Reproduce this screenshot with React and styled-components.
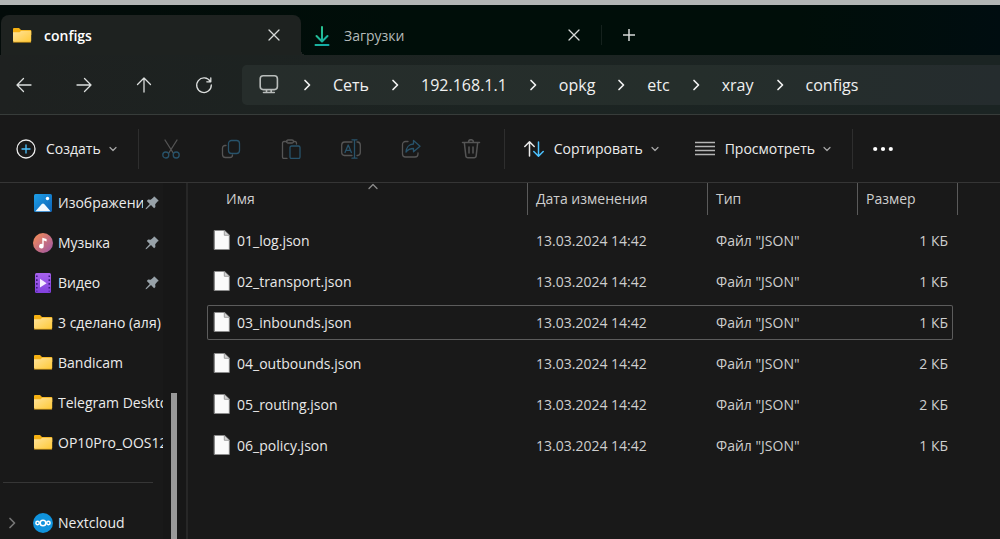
import React, { useState } from "react";
import styled, { createGlobalStyle, css } from "styled-components";

const places = [
  { name: "Изображения", icon: "pictures", pinned: true },
  { name: "Музыка", icon: "music", pinned: true },
  { name: "Видео", icon: "video", pinned: true },
  { name: "3 сделано (аля)", icon: "folder" },
  { name: "Bandicam", icon: "folder" },
  { name: "Telegram Desktop", icon: "folder" },
  { name: "OP10Pro_OOS12", icon: "folder" },
];

const crumbs = ["Сеть", "192.168.1.1", "opkg", "etc", "xray", "configs"];

const files = [
  { name: "01_log.json", size: "1 КБ" },
  { name: "02_transport.json", size: "1 КБ" },
  { name: "03_inbounds.json", size: "1 КБ" },
  { name: "04_outbounds.json", size: "2 КБ" },
  { name: "05_routing.json", size: "2 КБ" },
  { name: "06_policy.json", size: "1 КБ" },
];

/* ---------- icons ---------- */

const Icon = ({ size = 20, children, ...rest }) => (
  <svg
    width={size}
    height={size}
    viewBox={`0 0 ${size} ${size}`}
    fill="none"
    stroke="currentColor"
    strokeWidth="1.3"
    strokeLinecap="round"
    strokeLinejoin="round"
    aria-hidden="true"
    {...rest}
  >
    {children}
  </svg>
);

const BLUE = "#4cc2ff";
const DIM = "#555555";
const DIM_BLUE = "#28536b";

const FolderIcon = () => (
  <Icon stroke="none">
    <defs>
      <linearGradient id="folderFront" x1="0" y1="0" x2="1" y2="1">
        <stop offset="0" stopColor="#ffe39b" />
        <stop offset="1" stopColor="#ffc937" />
      </linearGradient>
    </defs>
    <path d="M1 3a1 1 0 0 1 1-1h5l2 2h9.500a.8.8 0 0 1 .8.8V9H1z" fill="#f5b012" />
    <path d="M1 6.300h6.500L9.300 4.700h9a.9.9 0 0 1 .9.9v9.500a1 1 0 0 1-1 1H2a1 1 0 0 1-1-1z" fill="url(#folderFront)" />
    <path d="M1.500 16.200h17.200" stroke="#e0a21b" strokeWidth=".8" />
  </Icon>
);

const PicturesIcon = () => (
  <Icon stroke="none">
    <defs>
      <linearGradient id="picBg" x1="0" y1="0" x2="1" y2="1">
        <stop offset="0" stopColor="#1d9fe8" />
        <stop offset="1" stopColor="#0d62b5" />
      </linearGradient>
    </defs>
    <rect x="1" y="1" width="18" height="18" rx="1.500" fill="url(#picBg)" />
    <path d="M2.500 18.300l6.300-7.200q1.200-1.300 2.400 0l6.300 7.200z" fill="#f2f9ff" />
    <circle cx="14.500" cy="5.500" r="1.700" fill="#fff" />
  </Icon>
);

const MusicIcon = () => (
  <Icon stroke="none">
    <defs>
      <linearGradient id="musicBg" x1="0" y1="0" x2="1" y2="1">
        <stop offset="0.100" stopColor="#f08a5b" />
        <stop offset="0.900" stopColor="#a3589f" />
      </linearGradient>
    </defs>
    <circle cx="10" cy="10" r="10" fill="url(#musicBg)" />
    <path d="M9.300 4.800l4.300 1.300v2.400l-2.900-.9v5.600a2.300 2.300 0 1 1-1.400-2.100z" fill="#fff" />
  </Icon>
);

const VideoIcon = () => (
  <Icon stroke="none">
    <defs>
      <linearGradient id="videoBg" x1="0" y1="0" x2="0" y2="1">
        <stop offset="0" stopColor="#a862ee" />
        <stop offset="1" stopColor="#8140dc" />
      </linearGradient>
    </defs>
    <rect x="2" y="0" width="16" height="20" rx="1.500" fill="url(#videoBg)" />
    <path d="M3.800 2.500v16M16.300 2.500v16" stroke="#3c1a80" strokeWidth="1.600" strokeDasharray="1.600 2.200" strokeLinecap="butt" />
    <path d="M7 5.800l6.600 4.400L7 14.600z" fill="#f5edff" />
  </Icon>
);

const CloudIcon = () => (
  <Icon stroke="#fff" strokeWidth="1.500">
    <circle cx="10" cy="10" r="10" fill="#1093dd" stroke="none" />
    <circle cx="10" cy="10" r="2.800" />
    <circle cx="4.600" cy="10" r="1.700" />
    <circle cx="15.400" cy="10" r="1.700" />
  </Icon>
);

const placeIcons = {
  folder: FolderIcon,
  pictures: PicturesIcon,
  music: MusicIcon,
  video: VideoIcon,
};

const PinIcon = () => (
  <Icon size={14} stroke="none" fill="#98a2a9">
    <path d="M8.700.7q.5-.5 1 0l3.600 3.600q.5.5 0 1l-.8.3-2.300 2.700.2 2.600-1.300 1.300L6 9.100l-4.400 4L.7 13.200l.1-.9 4-4.300L1.800 4.900l1.300-1.300 2.600.2 2.700-2.300z" />
  </Icon>
);

const FileIcon = () => (
  <Icon stroke="none" width="18" height="22" viewBox="0 0 18 22">
    <path d="M1.500.5h9.800l5 4.800v14.200H1.500z" fill="#fafafa" stroke="#8d8d8d" strokeWidth=".8" />
    <path d="M11.300.5v4.800h5z" fill="#d4d4d4" stroke="#8d8d8d" strokeWidth=".8" />
  </Icon>
);

const DownloadIcon = () => (
  <Icon strokeWidth="2" stroke="url(#dl)">
    <defs>
      <linearGradient id="dl" gradientUnits="userSpaceOnUse" x1="3" y1="2" x2="16" y2="18">
        <stop offset="0" stopColor="#2fc98d" />
        <stop offset="1" stopColor="#12a9a6" />
      </linearGradient>
    </defs>
    <path d="M10 1v14M4.500 10l5.500 5.500 5.500-5.500M3.500 19h13" />
  </Icon>
);

const CloseIcon = () => (
  <Icon size={12}>
    <path d="M1 1l10 10M11 1L1 11" />
  </Icon>
);

const PlusIcon = () => (
  <Icon size={12} strokeWidth="1.500">
    <path d="M6 0v12M0 6h12" />
  </Icon>
);

const ChevronRight = ({ width = 1.7 }) => (
  <Icon size={12} strokeWidth={width}>
    <path d="M4 1.500L8.500 6 4 10.500" />
  </Icon>
);

const ChevronDown = () => (
  <Icon size={8} stroke="#a8a8a8" strokeWidth="1.200">
    <path d="M1 2.500l3 3 3-3" />
  </Icon>
);

/* ---------- styles ---------- */

const GlobalStyle = createGlobalStyle`
  * {
    box-sizing: border-box;
  }
  body {
    margin: 0;
    background: #191919;
    color: #ececec;
    font: 14px/20px "Open Sans", "Noto Sans", sans-serif;
  }
  button {
    font: inherit;
    color: inherit;
    background: none;
    border: 0;
    padding: 0;
    cursor: pointer;
  }
  svg {
    display: block;
    flex: none;
  }
`;

const Window = styled.div`
  display: flex;
  flex-direction: column;
  height: 100vh;
  overflow: hidden;
  border-top: 5px solid #b2b6b5;
`;

const TabBar = styled.div`
  display: flex;
  align-items: flex-end;
  height: 50px;
  flex: none;
  padding-left: 1px;
  background: linear-gradient(90deg, #030b09, #000e09 40%, #000e09 80%, #000d10);
`;

const Tab = styled.div`
  position: relative;
  display: flex;
  align-items: center;
  width: 300px;
  height: 40px;
  padding: 0 21px 0 11px;
  border-radius: 8px 8px 0 0;
  color: #b4bab8;

  ${({ $active }) =>
    $active &&
    css`
      background: #1e2220;
      color: #fff;
      font-weight: 600;

      /* flared foot of the selected tab */
      &::after {
        content: "";
        position: absolute;
        left: 100%;
        bottom: 0;
        width: 5px;
        height: 5px;
        background: radial-gradient(circle at 100% 0, transparent 5px, #1e2422 5px);
      }
    `}
`;

const TabLabel = styled.button`
  display: flex;
  align-items: center;
  gap: 12px;
  flex: 1;
  padding-top: 1px;
`;

const TabClose = styled.button`
  color: #d6d9d8;
`;

const NewTab = styled.button`
  display: flex;
  align-items: center;
  height: 20px;
  margin-bottom: 10px;
  padding: 0 21px;
  border-left: 1px solid #15211d;
  color: #d6d9d8;
`;

const NavBar = styled.nav`
  display: flex;
  align-items: center;
  height: 60px;
  flex: none;
  padding-left: 4px;
  border-bottom: 1px solid #373c3a;
  background: linear-gradient(90deg, #1e2120, #1c2422 50%, #1b2423);
`;

const IconRow = styled.div`
  display: flex;
  gap: 20px;
`;

const IconButton = styled.button`
  display: flex;
  align-items: center;
  justify-content: center;
  width: 40px;
  height: 40px;
  color: #dcdfde;
`;

const AddressBar = styled.div`
  display: flex;
  align-items: center;
  flex: 1;
  height: 40px;
  margin-left: 18px;
  padding-left: 17px;
  border-radius: 5px 0 0 5px;
  background: linear-gradient(90deg, #262d2b, #252e2b 60%, #252c2e);
  color: #f0f0f0;
`;

const Crumbs = styled.ol`
  display: flex;
  margin: 0 0 0 22px;
  padding: 0;
  gap: 20px;
  list-style: none;
`;

const Crumb = styled.li`
  display: flex;
  align-items: center;
  gap: 20px;
`;

const CrumbLink = styled.a`
  color: inherit;
  font-size: 16px;
  line-height: 24px;
  text-decoration: none;
`;

const Toolbar = styled.div`
  display: flex;
  align-items: center;
  height: 68px;
  flex: none;
  padding-left: 16px;
  border-bottom: 1px solid #353535;
`;

const ToolButton = styled.button`
  display: flex;
  align-items: center;
  gap: 8px;
  height: 40px;
  margin-right: ${({ $after }) => $after || 0}px;

  svg:first-child {
    margin-right: 2px;
  }
`;

const Divider = styled.span`
  width: 1px;
  height: 40px;
  margin: 0 ${({ $right = 12 }) => $right}px 0 ${({ $left = 12 }) => $left}px;
  background: #2e2e2e;
`;

const Content = styled.div`
  display: flex;
  flex: 1;
  min-height: 0;
`;

const Sidebar = styled.aside`
  display: flex;
  flex: none;
  width: 188px;
  border-right: 2px solid #272727;
  overflow: hidden;
`;

const PlaceList = styled.ul`
  width: 163px;
  margin: 0;
  padding: 0;
  list-style: none;
`;

const PlaceItem = styled.li`
  display: flex;
  align-items: center;
  height: 40px;
  padding-right: ${({ $pinned }) => ($pinned ? 4 : 0)}px;
`;

const Expander = styled.span`
  display: flex;
  align-items: center;
  flex: none;
  width: 33px;
  padding-left: 6px;
  color: #767676;
`;

const PlaceLink = styled.a`
  display: flex;
  align-items: center;
  gap: 5px;
  flex: 1;
  min-width: 0;
  color: inherit;
  text-decoration: none;
`;

const PlaceName = styled.span`
  flex: 1;
  overflow: hidden;
  white-space: nowrap;
  margin-right: ${({ $pinned }) => ($pinned ? 2 : 0)}px;
`;

const Separator = styled.li`
  height: 1px;
  margin: 19px 10px 20px 3px;
  background: #363636;
`;

const ScrollTrack = styled.div`
  display: flex;
  flex: 1;
  justify-content: center;
  padding: 210px 2px 0 0;
  background: #171717;
`;

const ScrollThumb = styled.div`
  width: 6px;
  background: #999;
`;

const Main = styled.main`
  flex: 1;
  min-width: 0;
  padding-left: 19px;
`;

const FileTable = styled.table`
  display: block;
  color: #cecece;

  thead,
  tbody {
    display: grid;
  }
  tbody {
    gap: 6px;
    padding-top: 8px;
  }
`;

const HeadRow = styled.tr`
  display: grid;
  grid-template-columns: 321px 180px 150px 100px;
`;

const HeadCell = styled.th`
  position: relative;
  height: 32px;
  margin-left: ${({ $first }) => ($first ? 11 : 0)}px;
  padding: 6px 8px;
  border-right: 1px solid #5a5a5a;
  font-weight: 400;
  text-align: left;
`;

const SortMark = styled(Icon)`
  position: absolute;
  top: 0;
  left: 50%;
  margin-left: -5px;
`;

const FileRow = styled.tr`
  display: grid;
  grid-template-columns: 321px 180px 150px 95px;
  align-items: center;
  width: 746px;
  height: 35px;
  border-radius: 2px;
  box-shadow: ${({ $focused }) => ($focused ? "inset 0 0 0 1px #5c5c5c" : "none")};
`;

const Cell = styled.td`
  padding: 0 8px;
`;

const NameCell = styled(Cell)`
  display: flex;
  align-items: center;
  gap: 6px;
  padding-left: 6px;
  color: #e8e8e8;
`;

const SizeCell = styled(Cell)`
  padding-right: 5px;
  text-align: right;
`;

/* ---------- parts ---------- */

const Tabs = () => (
  <TabBar>
    <Tab $active>
      <TabLabel>
        <FolderIcon />
        configs
      </TabLabel>
      <TabClose aria-label="Закрыть configs">
        <CloseIcon />
      </TabClose>
    </Tab>
    <Tab>
      <TabLabel>
        <DownloadIcon />
        Загрузки
      </TabLabel>
      <TabClose aria-label="Закрыть Загрузки">
        <CloseIcon />
      </TabClose>
    </Tab>
    <NewTab aria-label="Новая вкладка">
      <PlusIcon />
    </NewTab>
  </TabBar>
);

const Navigation = () => (
  <NavBar>
    <IconRow>
      <IconButton aria-label="Назад">
        <Icon>
          <path d="M17 10H3M9.500 3.500L3 10l6.500 6.500" />
        </Icon>
      </IconButton>
      <IconButton aria-label="Вперёд">
        <Icon>
          <path d="M3 10h14M10.500 3.500L17 10l-6.500 6.500" />
        </Icon>
      </IconButton>
      <IconButton aria-label="Вверх">
        <Icon>
          <path d="M10 17V3M3.500 9.500L10 3l6.500 6.500" />
        </Icon>
      </IconButton>
      <IconButton aria-label="Обновить">
        <Icon>
          <path d="M16.300 6.500A7.300 7.300 0 1 0 17.300 10M16.800 2.800v4h-4" />
        </Icon>
      </IconButton>
    </IconRow>
    <AddressBar>
      <Icon stroke="#b9bdbb" strokeWidth="1.600">
        <rect x="1.200" y="0.800" width="17.200" height="13.800" rx="3" />
        <path d="M7.500 15v2M12.200 15v2M4.500 17.500h10.800" />
      </Icon>
      <Crumbs>
        {crumbs.map((crumb) => (
          <Crumb key={crumb}>
            <ChevronRight />
            <CrumbLink href="#">{crumb}</CrumbLink>
          </Crumb>
        ))}
      </Crumbs>
    </AddressBar>
  </NavBar>
);

const Commands = () => (
  <Toolbar>
    <ToolButton $after={9}>
      <Icon>
        <circle cx="10" cy="10" r="9" />
        <path d="M10 6v8M6 10h8" stroke={BLUE} />
      </Icon>
      Создать
      <ChevronDown />
    </ToolButton>
    <Divider />
    <IconRow>
      <IconButton aria-label="Вырезать" disabled>
        <Icon stroke={DIM}>
          <path d="M4 1l8.200 13M16 1L7.800 14" />
          <circle cx="4.800" cy="16" r="3" stroke={DIM_BLUE} />
          <circle cx="15.200" cy="16" r="3" stroke={DIM_BLUE} />
        </Icon>
      </IconButton>
      <IconButton aria-label="Копировать" disabled>
        <Icon stroke={DIM}>
          <path d="M5 6.500H4a2.500 2.500 0 0 0-2.500 2.500v6.500A3 3 0 0 0 4.500 18.500h4.500a2.500 2.500 0 0 0 2.500-2.500" />
          <rect x="7.500" y="1.500" width="11" height="13" rx="3" stroke={DIM_BLUE} />
        </Icon>
      </IconButton>
      <IconButton aria-label="Вставить" disabled>
        <Icon stroke={DIM}>
          <path d="M6 2.500H3a1.500 1.500 0 0 0-1.500 1.500v14A1.500 1.500 0 0 0 3 19.500h3M12.500 2.500H14A1.500 1.500 0 0 1 15.500 4v1" />
          <rect x="5.500" y="1" width="7" height="3" rx="1.500" />
          <rect x="9" y="7" width="10" height="12.500" rx="1.500" stroke={DIM_BLUE} />
        </Icon>
      </IconButton>
      <IconButton aria-label="Переименовать" disabled>
        <Icon stroke={DIM}>
          <path d="M11 3H3.500A3 3 0 0 0 .7 6v7.500a3 3 0 0 0 2.800 3H11M16 3h.5a3 3 0 0 1 2.800 3v7.500a3 3 0 0 1-2.800 3H16" />
          <path d="M13.500 1v18M11 .8h5M11 19.200h5M4 13.500L7.200 6l3.200 7.500M5 11.300h4.300" stroke={DIM_BLUE} />
        </Icon>
      </IconButton>
      <IconButton aria-label="Поделиться" disabled>
        <Icon stroke={DIM}>
          <path d="M7 2.500H4.500a3 3 0 0 0-3 3V15a3 3 0 0 0 3 3H14a3 3 0 0 0 3-3v-1" />
          <path d="M12.500 1.500l6.500 5.700-6.500 5.600V9.500c-3.500 0-5.500 1-7.500 3.500.3-4.500 3-8 7.500-8z" stroke={DIM_BLUE} />
        </Icon>
      </IconButton>
      <IconButton aria-label="Удалить" disabled>
        <Icon stroke={DIM} strokeWidth="1.500">
          <path d="M1.500 3.500h17M7.500 3.200a2.500 2.500 0 0 1 5 0M3.300 3.500l1.500 13.200a2.200 2.200 0 0 0 2.200 2h6a2.200 2.200 0 0 0 2.200-2L16.700 3.500M8 8v6M12 8v6" />
        </Icon>
      </IconButton>
    </IconRow>
    <Divider $left={13} $right={19} />
    <ToolButton $after={36}>
      <Icon strokeWidth="1.500">
        <path d="M5.500 17V3M.8 7.500L5.500 2.800l4.700 4.700" />
        <path d="M14.500 3v14M9.800 12.500l4.700 4.700 4.700-4.700" stroke={BLUE} />
      </Icon>
      Сортировать
      <ChevronDown />
    </ToolButton>
    <ToolButton $after={9}>
      <Icon stroke="#b5b5b5" strokeWidth="1.300" strokeLinecap="butt">
        <path d="M0 3.500h20M0 7.500h20M0 11.500h20M0 15.500h20" />
      </Icon>
      Просмотреть
      <ChevronDown />
    </ToolButton>
    <Divider $right={10} />
    <IconButton aria-label="Дополнительно">
      <Icon stroke="none" fill="#fff">
        <circle cx="2.200" cy="10" r="2.100" />
        <circle cx="10" cy="10" r="2.100" />
        <circle cx="17.800" cy="10" r="2.100" />
      </Icon>
    </IconButton>
  </Toolbar>
);

const Places = () => (
  <Sidebar>
    <PlaceList>
      {places.map(({ name, icon, pinned }) => {
        const PlaceIcon = placeIcons[icon];
        return (
          <PlaceItem key={name} $pinned={pinned}>
            <Expander />
            <PlaceLink href="#">
              <PlaceIcon />
              <PlaceName $pinned={pinned}>{name}</PlaceName>
            </PlaceLink>
            {pinned && <PinIcon />}
          </PlaceItem>
        );
      })}
      <Separator role="separator" />
      <PlaceItem>
        <Expander>
          <ChevronRight />
        </Expander>
        <PlaceLink href="#">
          <CloudIcon />
          <PlaceName>Nextcloud</PlaceName>
        </PlaceLink>
      </PlaceItem>
    </PlaceList>
    <ScrollTrack>
      <ScrollThumb />
    </ScrollTrack>
  </Sidebar>
);

const App = () => {
  const [focused, setFocused] = useState("03_inbounds.json");

  return (
    <>
      <GlobalStyle />
      <Window>
        <Tabs />
        <Navigation />
        <Commands />
        <Content>
          <Places />
          <Main>
            <FileTable>
              <thead>
                <HeadRow>
                  <HeadCell $first aria-sort="ascending">
                    Имя
                    <SortMark size={10} stroke="#8c8c8c">
                      <path d="M1 5.500L5 1.500l4 4" />
                    </SortMark>
                  </HeadCell>
                  <HeadCell>Дата изменения</HeadCell>
                  <HeadCell>Тип</HeadCell>
                  <HeadCell>Размер</HeadCell>
                </HeadRow>
              </thead>
              <tbody>
                {files.map(({ name, size }) => (
                  <FileRow key={name} $focused={name === focused} onClick={() => setFocused(name)}>
                    <NameCell>
                      <FileIcon />
                      {name}
                    </NameCell>
                    <Cell>13.03.2024 14:42</Cell>
                    <Cell>Файл "JSON"</Cell>
                    <SizeCell>{size}</SizeCell>
                  </FileRow>
                ))}
              </tbody>
            </FileTable>
          </Main>
        </Content>
      </Window>
    </>
  );
};

export default App;
